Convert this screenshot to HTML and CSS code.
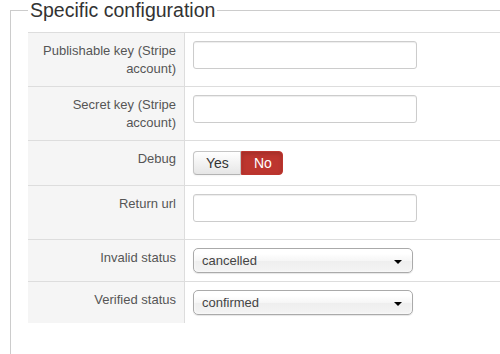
FILE: index.html
```html
<!DOCTYPE html>
<html lang="en">
<head>
  <meta charset="UTF-8">
  <title>Specific configuration</title>
  <link rel="stylesheet" href="styles.css">
</head>
<body>

  <fieldset class="config">
    <legend>Specific configuration</legend>

    <table class="admintable">
      <tr>
        <td class="key"><label for="publishable-key">Publishable key (Stripe account)</label></td>
        <td><input type="text" id="publishable-key" class="inputbox"></td>
      </tr>
      <tr>
        <td class="key"><label for="secret-key">Secret key (Stripe account)</label></td>
        <td><input type="text" id="secret-key" class="inputbox"></td>
      </tr>
      <tr>
        <td class="key"><label>Debug</label></td>
        <td>
          <!-- Yes / No toggle -->
          <div class="btn-group">
            <button class="btn">Yes</button>
            <button class="btn btn-danger">No</button>
          </div>
        </td>
      </tr>
      <tr>
        <td class="key"><label for="return-url">Return url</label></td>
        <td><input type="text" id="return-url" class="inputbox"></td>
      </tr>
      <tr>
        <td class="key"><label>Invalid status</label></td>
        <td>
          <div class="chzn-single">
            <span>cancelled</span>
            <b class="arrow"></b>
          </div>
        </td>
      </tr>
      <tr>
        <td class="key"><label>Verified status</label></td>
        <td>
          <div class="chzn-single">
            <span>confirmed</span>
            <b class="arrow"></b>
          </div>
        </td>
      </tr>
    </table>
  </fieldset>

</body>
</html>
```

FILE: styles.css
```css
html, body {
  overflow: hidden;
}

body {
  font-family: 'Liberation Sans', Arial, sans-serif;
  font-size: 13px;
  line-height: 18px;
  color: #333;
  margin: 0;
  padding: 0;
  background-color: #fff;
}

.config {
  width: 600px;
  margin: 0 0 0 10px;
  padding: 12px 17px 40px 17px;
  border: 1px solid #ccc;
  min-height: 320px;
}

.config legend {
  font-size: 19.5px;
  line-height: 20px;
  padding: 0 2px;
  color: #333;
}

.admintable {
  width: 100%;
  border-collapse: collapse;
}

.admintable td {
  padding: 8px;
  border-top: 1px solid #ddd;
  vertical-align: top;
  text-align: left;
}

.admintable td.key {
  width: 140px;
  background-color: #f5f5f5;
  border-right: 1px solid #ddd;
  text-align: right;
  color: #555;
}

.key label {
  display: block;
  padding-top: 1px;
}

.inputbox {
  display: block;
  box-sizing: border-box;
  width: 224px;
  height: 28px;
  margin: 0 0 9px 0;
  padding: 4px 6px;
  border: 1px solid #ccc;
  border-radius: 3px;
  box-shadow: inset 0 1px 1px rgba(0, 0, 0, 0.075);
  background-color: #fff;
  font-family: inherit;
  font-size: 13px;
}

.btn-group {
  display: flex;
  padding: 2px 0;
}

.btn {
  height: 24px;
  padding: 0 12px;
  font-family: inherit;
  font-size: 14px;
  line-height: 22px;
  color: #333;
  background-image: linear-gradient(#fff, #e6e6e6);
  border: 1px solid #c5c5c5;
  border-bottom-color: #b3b3b3;
  box-shadow: inset 0 1px 0 rgba(255, 255, 255, 0.2), 0 1px 2px rgba(0, 0, 0, 0.05);
  border-radius: 4px 0 0 4px;
  width: 48px;
}

.btn-danger {
  width: 42px;
  color: #fff;
  background-image: none;
  background-color: #bd362f;
  border-color: #bd362f;
  border-radius: 0 4px 4px 0;
  box-shadow: inset 0 2px 4px rgba(0, 0, 0, 0.15);
}

.chzn-single {
  display: flex;
  align-items: center;
  justify-content: space-between;
  box-sizing: border-box;
  width: 220px;
  height: 25px;
  padding: 0 10px 0 8px;
  border: 1px solid #aaa;
  border-radius: 5px;
  background-image: linear-gradient(#fff 20%, #f6f6f6 50%, #eee 52%, #f4f4f4 100%);
  box-shadow: inset 0 0 3px #fff, 0 1px 1px rgba(0, 0, 0, 0.1);
  color: #444;
  line-height: 23px;
}

.chzn-single .arrow {
  width: 0;
  height: 0;
  margin-top: 2px;
  border-left: 4px solid transparent;
  border-right: 4px solid transparent;
  border-top: 4px solid #000;
}
```
